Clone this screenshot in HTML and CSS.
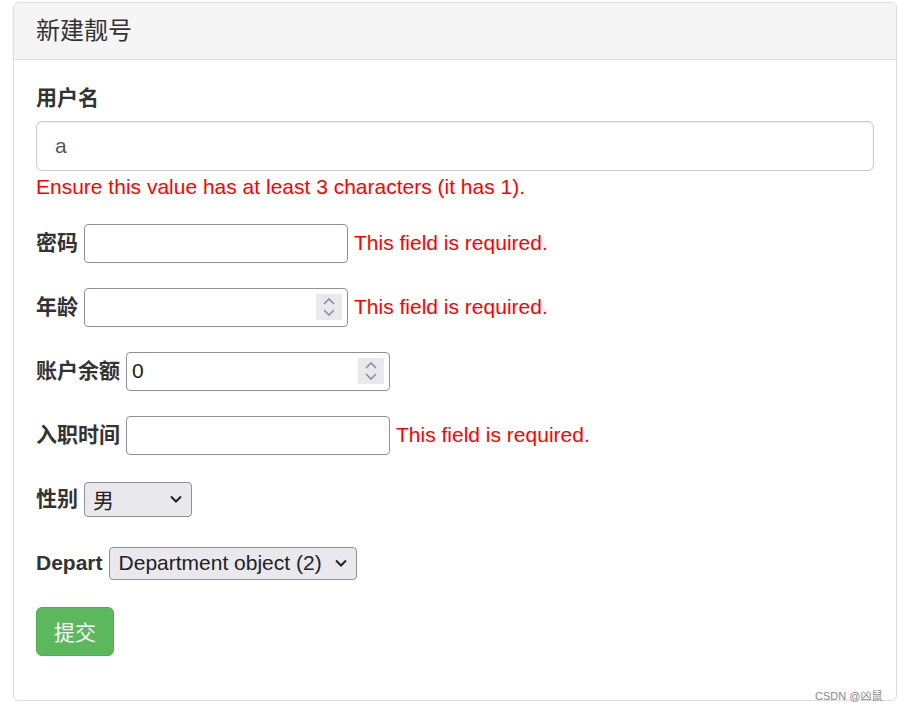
FILE: index.html
```html
<!DOCTYPE html>
<html lang="zh-CN">
  <head>
    <meta charset="UTF-8">
    <title>新建靓号</title>
    <link rel="stylesheet" href="styles.css">
  </head>
  <body>
    <div class="panel">
      <div class="panel-heading">
        <h3 class="panel-title">新建靓号</h3>
      </div>
      <div class="panel-body">
        <form>
          <div class="form-group">
            <label class="block-label">用户名</label>
            <input class="form-control" type="text" value="a">
            <span class="error">Ensure this value has at least 3 characters (it has 1).</span>
          </div>

          <div class="row">
            <label>密码</label>
            <div class="field"><input type="password"></div>
            <span class="error">This field is required.</span>
          </div>

          <div class="row">
            <label>年龄</label>
            <div class="field">
              <input type="text">
              <span class="spin">
                <svg width="14" height="22" viewBox="0 0 14 22"><path d="M2 8 L7 3 L12 8 M2 14 L7 19 L12 14" fill="none" stroke="#8f8f9d" stroke-width="1.6"/></svg>
              </span>
            </div>
            <span class="error">This field is required.</span>
          </div>

          <div class="row">
            <label>账户余额</label>
            <div class="field">
              <input type="text" value="0">
              <span class="spin">
                <svg width="14" height="22" viewBox="0 0 14 22"><path d="M2 8 L7 3 L12 8 M2 14 L7 19 L12 14" fill="none" stroke="#8f8f9d" stroke-width="1.6"/></svg>
              </span>
            </div>
          </div>

          <div class="row">
            <label>入职时间</label>
            <div class="field"><input type="text"></div>
            <span class="error">This field is required.</span>
          </div>

          <div class="row">
            <label>性别</label>
            <div class="select select-gender">
              <span>男</span>
              <svg width="12" height="8" viewBox="0 0 12 8"><path d="M1 1.5 L6 6.5 L11 1.5" fill="none" stroke="#222" stroke-width="2"/></svg>
            </div>
          </div>

          <div class="row row-last">
            <label>Depart</label>
            <div class="select select-depart">
              <span>Department object (2)</span>
              <svg width="12" height="8" viewBox="0 0 12 8"><path d="M1 1.5 L6 6.5 L11 1.5" fill="none" stroke="#222" stroke-width="2"/></svg>
            </div>
          </div>

          <div class="form-group">
            <button type="button" class="btn">提交</button>
          </div>
        </form>
      </div>
    </div>
    <div class="mark">CSDN @凶鼠</div>
  </body>
</html>
```

FILE: styles.css
```css
body {
  margin: 0;
  font-family: "Liberation Sans", Arial, "Noto Sans CJK SC", sans-serif;
  font-size: 21px;
  line-height: 30px;
  color: #333;
  background-color: #fff;
}
.panel {
  width: 882px;
  margin: 2px 0 0 13px;
  border: 1px solid #ddd;
  border-radius: 6px;
  box-shadow: 0 1px 2px rgba(0, 0, 0, 0.08);
  overflow: hidden;
}
.panel-heading {
  background-color: #f5f5f5;
  border-bottom: 1px solid #ddd;
  padding: 15px 22px;
}
.panel-title {
  margin: 0;
  font-size: 24px;
  line-height: 26px;
  font-weight: normal;
  color: #333;
}
.panel-body {
  padding: 23px 22px 22px;
}
.form-group {
  margin-bottom: 22px;
}
.block-label {
  display: block;
  font-weight: bold;
  margin-bottom: 8px;
}
.form-control {
  display: block;
  box-sizing: border-box;
  width: 100%;
  height: 50px;
  padding: 0 18px;
  font: inherit;
  color: #555;
  border: 1px solid #ccc;
  border-radius: 6px;
  box-shadow: inset 0 1px 2px rgba(0, 0, 0, 0.075);
  outline: none;
}
.form-group .error {
  display: block;
  margin-top: 1px;
}
.error {
  color: #f00;
}
.row {
  display: flex;
  align-items: center;
  gap: 6px;
  height: 38px;
  margin-bottom: 26px;
}
.row-last {
  margin-bottom: 25px;
}
.row label {
  font-weight: bold;
}
.field {
  display: flex;
  align-items: center;
  box-sizing: border-box;
  width: 264px;
  height: 39px;
  border: 1px solid #8f8f9d;
  border-radius: 4px;
  padding: 0 5px 0 5px;
  background-color: #fff;
}
.field input {
  flex: 1;
  min-width: 0;
  border: none;
  outline: none;
  padding: 0;
  font: inherit;
  color: #222;
  background: transparent;
}
.spin {
  display: flex;
  align-items: center;
  justify-content: center;
  width: 26px;
  height: 26px;
  background-color: #e9e9ed;
}
.select {
  display: flex;
  align-items: center;
  justify-content: space-between;
  box-sizing: border-box;
  border: 1px solid #8f8f9d;
  border-radius: 4px;
  background-color: #e9e9ed;
  color: #222;
  padding: 0 9px 0 8px;
}
.select-gender {
  width: 108px;
  height: 35px;
  font-family: "Noto Sans CJK SC", sans-serif;
}
.select-depart {
  width: 248px;
  height: 33px;
  padding-left: 9px;
}
.btn {
  padding: 9px 17px;
  font-family: "Noto Sans CJK SC", sans-serif;
  font-size: 21px;
  line-height: 29px;
  color: #fff;
  background-color: #5cb85c;
  border: 1px solid #4cae4c;
  border-radius: 6px;
  cursor: pointer;
}
.mark {
  position: absolute;
  left: 815px;
  top: 689px;
  font-family: "Liberation Sans", "Noto Sans CJK SC", sans-serif;
  font-size: 11px;
  line-height: 14px;
  color: #888;
}
```
